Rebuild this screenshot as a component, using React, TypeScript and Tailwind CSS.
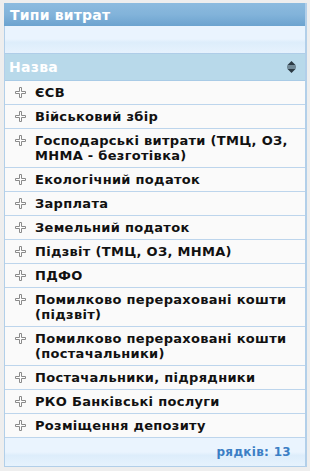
import React from "react";

const rows: string[] = [
  "ЄСВ",
  "Військовий збір",
  "Господарські витрати (ТМЦ, ОЗ, МНМА - безготівка)",
  "Екологічний податок",
  "Зарплата",
  "Земельний податок",
  "Підзвіт (ТМЦ, ОЗ, МНМА)",
  "ПДФО",
  "Помилково перераховані кошти (підзвіт)",
  "Помилково перераховані кошти (постачальники)",
  "Постачальники, підрядники",
  "РКО Банківські послуги",
  "Розміщення депозиту",
];

function PlusIcon() {
  return (
    <svg width="11" height="11" viewBox="0 0 11 11" className="shrink-0 mt-[2px]">
      <path
        d="M4.5 0.5 H6.5 V4.5 H10.5 V6.5 H6.5 V10.5 H4.5 V6.5 H0.5 V4.5 H4.5 Z"
        fill="#ffffff"
        stroke="#8a8a8a"
        strokeWidth="1"
      />
    </svg>
  );
}

function SortIcon() {
  return (
    <svg width="9" height="12" viewBox="0 0 9 12">
      <path d="M4.5 0 L9 4.5 H0 Z" fill="#2b3a44" />
      <rect x="0" y="5.5" width="9" height="1" fill="#2b3a44" />
      <path d="M4.5 12 L9 7.5 H0 Z" fill="#2b3a44" />
    </svg>
  );
}

export default function App() {
  return (
    <div
      className="w-[310px] h-[471px] bg-[#eeeeee] pt-[3px] pl-[4px] pr-[3px] overflow-hidden"
      style={{ fontFamily: '"DejaVu Sans", Verdana, sans-serif' }}
    >
      <div className="border-l border-r-2 border-b border-[#b2cfe9] bg-[#fafafa]">
        {/* title */}
        <div className="h-[23px] -ml-px bg-gradient-to-b from-[#8cbbdf] via-[#82b3da] to-[#6ca3cf] flex items-center pl-[6px]">
          <span className="text-white font-bold text-[14px] tracking-[0.2px] leading-none">
            Типи витрат
          </span>
        </div>
        {/* toolbar */}
        <div className="h-[28px] border-b border-[#afcde8] bg-[linear-gradient(#eaf4fe_0%,#eaf4fe_48%,#ddedfb_60%,#e6f2fd_100%)]" />
        {/* header */}
        <div className="h-[27px] border-b border-[#a9cbe6] bg-[#b8d9ea] flex items-center justify-between pl-[4px] pr-[9px]">
          <span className="text-white font-bold text-[14px] tracking-[0.3px] leading-none">Назва</span>
          <SortIcon />
        </div>
        {/* rows */}
        {rows.map((r) => (
          <div
            key={r}
            className="flex items-start gap-[9px] pl-[10px] pr-[4px] py-[4px] border-b border-[#bdd5ec] bg-[#fafafa]"
          >
            <PlusIcon />
            <span className="text-[13px] tracking-[0.3px] leading-[15px] font-bold text-[#111111]">{r}</span>
          </div>
        ))}
        {/* footer */}
        <div className="h-[28px] flex items-center justify-end pr-[14px] bg-[linear-gradient(#eaf4fe_0%,#eaf4fe_50%,#ddedfb_62%,#e6f2fd_100%)]">
          <span className="text-[12px] tracking-[0.3px] font-bold text-[#3b7ec5] leading-none">рядків: 13</span>
        </div>
      </div>
    </div>
  );
}
